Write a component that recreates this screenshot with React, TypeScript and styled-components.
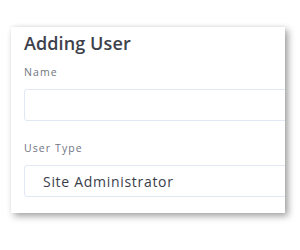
import styled, { createGlobalStyle } from 'styled-components';

const GlobalStyle = createGlobalStyle`
  html, body {
    margin: 0;
    padding: 0;
    background: #ffffff;
  }
  body {
    font-family: "Open Sans", "Liberation Sans", sans-serif;
  }
`;

const Page = styled.div`
  width: 300px;
  height: 250px;
  padding: 27px 0 0 11px;
  box-sizing: border-box;
  overflow: hidden;
`;

const Card = styled.div`
  width: 274px;
  height: 186px;
  background: #ffffff;
  box-shadow: 3px 3px 7px rgba(0, 0, 0, 0.38), 0 -1px 3px rgba(0, 0, 0, 0.04);
  padding: 4px 0 0 13px;
  box-sizing: border-box;
  overflow: hidden;
`;

const Title = styled.h2`
  margin: 0;
  font-size: 18px;
  line-height: 24px;
  font-weight: 600;
  color: #3d414c;
  letter-spacing: 0.1px;
`;

const Label = styled.div<{ $top: number }>`
  font-size: 10.5px;
  line-height: 14px;
  font-weight: 500;
  color: #70747f;
  letter-spacing: 1.1px;
  margin-top: ${(p) => p.$top}px;
`;

const Field = styled.div`
  width: 290px;
  height: 32px;
  box-sizing: border-box;
  border: 1px solid #e1e8f3;
  border-radius: 3px;
  margin-top: 10px;
  padding-left: 18px;
  display: flex;
  align-items: center;
  font-size: 14px;
  letter-spacing: 0.7px;
  color: #3a3e49;
`;

export default function App() {
  return (
    <>
      <GlobalStyle />
      <Page>
        <Card>
          <Title>Adding User</Title>
          <Label $top={10}>Name</Label>
          <Field />
          <Label $top={20}>User Type</Label>
          <Field>Site Administrator</Field>
        </Card>
      </Page>
    </>
  );
}
